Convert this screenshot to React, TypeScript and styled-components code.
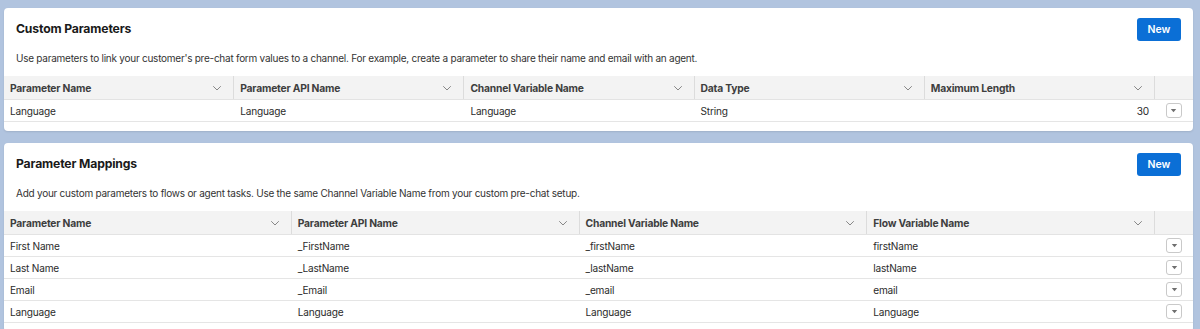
import React from "react";
import styled, { createGlobalStyle } from "styled-components";

const GlobalStyle = createGlobalStyle`
  html, body {
    margin: 0;
    padding: 0;
    background: #b1c4df;
    font-family: Inter, "Liberation Sans", sans-serif;
    color: #181818;
  }
`;

type Column = { label: string; align?: "left" | "right" };

type TableData = {
  title: string;
  description: string;
  columns: Column[];
  rows: string[][];
};

const customParameters: TableData = {
  title: "Custom Parameters",
  description:
    "Use parameters to link your customer's pre-chat form values to a channel. For example, create a parameter to share their name and email with an agent.",
  columns: [
    { label: "Parameter Name" },
    { label: "Parameter API Name" },
    { label: "Channel Variable Name" },
    { label: "Data Type" },
    { label: "Maximum Length", align: "right" },
  ],
  rows: [["Language", "Language", "Language", "String", "30"]],
};

const parameterMappings: TableData = {
  title: "Parameter Mappings",
  description:
    "Add your custom parameters to flows or agent tasks. Use the same Channel Variable Name from your custom pre-chat setup.",
  columns: [
    { label: "Parameter Name" },
    { label: "Parameter API Name" },
    { label: "Channel Variable Name" },
    { label: "Flow Variable Name" },
  ],
  rows: [
    ["First Name", "_FirstName", "_firstName", "firstName"],
    ["Last Name", "_LastName", "_lastName", "lastName"],
    ["Email", "_Email", "_email", "email"],
    ["Language", "Language", "Language", "Language"],
  ],
};

const Chevron = () => (
  <svg width="10" height="10" viewBox="0 0 10 10" fill="none">
    <path d="M1.5 3.5L5 7l3.5-3.5" stroke="#7a7a7a" strokeWidth="0.9" strokeLinecap="round" strokeLinejoin="round" />
  </svg>
);

const Caret = () => (
  <svg width="7" height="5" viewBox="0 0 7 5">
    <path d="M0.8 1h5.4L3.5 4.2z" fill="#6f6f6f" />
  </svg>
);

const ParamCard = ({ data }: { data: TableData }) => {
  const template = `repeat(${data.columns.length}, 1fr) 38px`;
  return (
    <Card>
      <CardHeader>
        <Title>{data.title}</Title>
        <NewButton>New</NewButton>
      </CardHeader>
      <Description>{data.description}</Description>
      <Table>
        <HeaderRow style={{ gridTemplateColumns: template }}>
          {data.columns.map((c) => (
            <HeaderCell key={c.label}>
              <span>{c.label}</span>
              <Chevron />
            </HeaderCell>
          ))}
          <HeaderCell />
        </HeaderRow>
        {data.rows.map((row, i) => (
          <Row key={i} style={{ gridTemplateColumns: template }}>
            {row.map((value, j) => (
              <Cell key={j} $align={data.columns[j].align}>
                {value}
              </Cell>
            ))}
            <ActionCell>
              <ActionButton>
                <Caret />
              </ActionButton>
            </ActionCell>
          </Row>
        ))}
      </Table>
    </Card>
  );
};

export default function App() {
  return (
    <>
      <GlobalStyle />
      <Page>
        <ParamCard data={customParameters} />
        <ParamCard data={parameterMappings} />
      </Page>
    </>
  );
}

const Page = styled.div`
  display: flex;
  flex-direction: column;
  gap: 12px;
  padding: 8px 7px 0 4px;
`;

const Card = styled.section`
  background: #fff;
  border-radius: 4px;
  box-shadow: 0 1px 2px rgb(0 0 0 / 0.1);
  padding-bottom: 9px;
  overflow: hidden;
`;

const CardHeader = styled.div`
  display: flex;
  align-items: center;
  justify-content: space-between;
  padding: 9px 12px 0 12px;
  height: 24px;
`;

const Title = styled.h2`
  margin: 0;
  font-size: 12.2px;
  letter-spacing: -0.15px;
  line-height: 14px;
  font-weight: 700;
  color: #1a1a1a;
`;

const NewButton = styled.button`
  font-family: inherit;
  font-size: 10.5px;
  font-weight: 600;
  color: #fff;
  background: #0b6fd6;
  border: none;
  border-radius: 3px;
  width: 44px;
  height: 23px;
  padding: 0;
`;

const Description = styled.p`
  margin: 0;
  padding: 10px 12px 11px;
  font-size: 10px;
  letter-spacing: -0.25px;
  line-height: 14px;
  color: #333;
`;

const Table = styled.div`
  display: flex;
  flex-direction: column;
`;

const HeaderRow = styled.div`
  display: grid;
  height: 23px;
  background: #f3f3f3;
  border-bottom: 1px solid #e3e3e3;
`;

const HeaderCell = styled.div`
  display: flex;
  align-items: center;
  justify-content: space-between;
  padding: 0 11px 0 6px;
  font-size: 10.3px;
  letter-spacing: -0.2px;
  font-weight: 700;
  color: #3e3e3e;
  border-right: 1px solid #dcdcdc;
  &:last-child {
    border-right: none;
  }
`;

const Row = styled.div`
  display: grid;
  height: 21px;
  border-bottom: 1px solid #e5e5e5;
`;

const Cell = styled.div<{ $align?: "left" | "right" }>`
  display: flex;
  align-items: center;
  justify-content: ${(p) => (p.$align === "right" ? "flex-end" : "flex-start")};
  padding: 0 6px;
  font-size: 10.1px;
  letter-spacing: -0.2px;
  color: #2b2b2b;
`;

const ActionCell = styled.div`
  display: flex;
  align-items: center;
  justify-content: center;
`;

const ActionButton = styled.div`
  display: flex;
  align-items: center;
  justify-content: center;
  width: 14px;
  height: 13px;
  border: 1px solid #c9c9c9;
  border-radius: 3px;
  background: #fff;
`;
